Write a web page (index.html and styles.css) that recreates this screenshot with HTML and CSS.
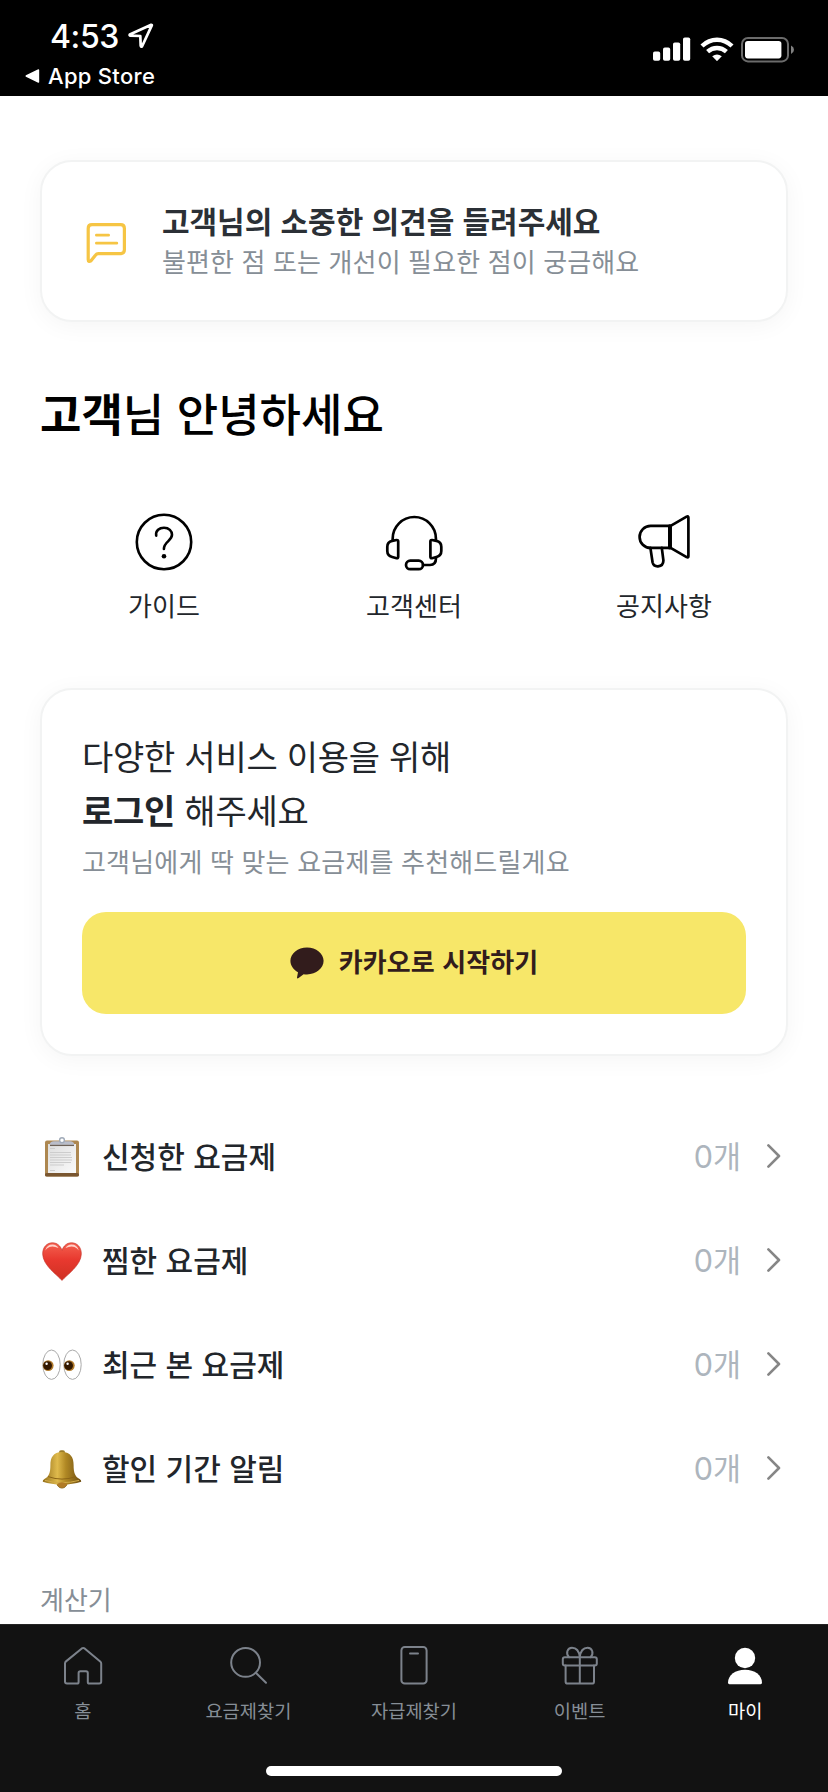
FILE: index.html
```html
<!DOCTYPE html>
<html lang="ko">
<head>
<meta charset="utf-8">
<title>마이</title>
<link rel="stylesheet" href="styles.css">
</head>
<body>
<div class="screen">
  <header class="status">
    <div class="status-left">
      <div class="time">4:53
        <svg class="locate" width="26" height="26" viewBox="0 0 26 26"><path d="M23.2 1.8 L1.8 11.4 Q1.2 12.4 2.6 12.7 L12.3 13 L12.7 22.8 Q13 24.3 14.1 23.2 L23.8 2.4 Q24 1.6 23.2 1.8Z" fill="none" stroke="#fff" stroke-width="2.7" stroke-linejoin="round"/></svg>
      </div>
      <div class="back"><svg width="15" height="14" viewBox="0 0 15 14"><path d="M13.5 1 V13 L1.2 7Z" fill="#fff" stroke="#fff" stroke-width="1.4" stroke-linejoin="round"/></svg>App Store</div>
    </div>
    <div class="status-right">
      <svg width="38" height="24" viewBox="0 0 38 24" fill="#fff"><rect x="0" y="14.6" width="7.2" height="9.2" rx="1.8"/><rect x="10" y="10.6" width="7.2" height="13.2" rx="1.8"/><rect x="20" y="5.4" width="7.2" height="18.4" rx="1.8"/><rect x="30" y="0.4" width="7.2" height="23.4" rx="1.8"/></svg>
      <svg class="wifi" width="34" height="25" viewBox="0 0 34 25"><g fill="none" stroke="#fff" stroke-width="4.4"><path d="M2 9 Q8.5 2.7 17 2.7 T32 9"/><path d="M7.6 14.7 Q11.7 11 17 11 T26.4 14.7"/></g><path d="M12.2 19.3 Q17 15.8 21.8 19.3 L17.4 23.8 Q17 24.2 16.6 23.8Z" fill="#fff"/></svg>
      <svg class="battery" width="54" height="26" viewBox="0 0 54 26"><rect x="1" y="1" width="46" height="23.4" rx="6" fill="none" stroke="#6b6b6b" stroke-width="2"/><rect x="4" y="4" width="36.4" height="17.4" rx="2.8" fill="#fff"/><path d="M50 8.6 Q53 10 53 12.8 T50 17Z" fill="#808080"/></svg>
    </div>
  </header>

  <main class="content">
    <section class="card feedback">
      <svg class="feedback-icon" width="42" height="42" viewBox="0 0 42 42" fill="none" stroke="#f6c544" stroke-width="3.2" stroke-linejoin="round" stroke-linecap="round"><path d="M6 3.6 H34.6 Q38.4 3.6 38.4 7.4 V28.8 Q38.4 32.6 34.6 32.6 H12.4 Q10.6 32.6 9.4 34.2 L5 39.8 Q2.2 41.4 2.2 38.4 V7.4 Q2.2 3.6 6 3.6Z"/><path d="M10.4 14.2 H22.6 M10.4 22.2 H30.8" stroke-width="2.8"/></svg>
      <div>
        <h2 class="feedback-title">고객님의 소중한 의견을 들려주세요</h2>
        <p class="feedback-sub">불편한 점 또는 개선이 필요한 점이 궁금해요</p>
      </div>
    </section>

    <h1 class="greeting"><b>고객</b>님 안녕하세요</h1>

    <nav class="shortcuts">
      <a class="shortcut">
        <svg width="60" height="60" viewBox="0 0 60 60" fill="none" stroke="#000" stroke-width="2.6" stroke-linecap="round"><circle cx="30" cy="31" r="27.2"/><path d="M22.2 24.6 C21.4 19.6 25.4 16.8 30 16.8 C35 16.8 38 20 38 23.8 C38 29.8 29.9 30.6 29.9 38"/><circle cx="30" cy="45.2" r="2.3" fill="#000" stroke="none"/></svg>
        <span>가이드</span>
      </a>
      <a class="shortcut">
        <svg width="60" height="60" viewBox="0 0 60 60" fill="none" stroke="#000" stroke-width="2.7" stroke-linecap="round" stroke-linejoin="round"><path d="M8.7 29 V27.6 A21.6 21.6 0 0 1 51.9 27.6 V29"/><path d="M12.6 29 L8.2 29.9 Q3.3 31 3.3 35.8 V40 Q3.3 44.6 8.2 46 L12.6 47.2 Q14.2 47.4 14.2 45.8 V30.4 Q14.2 28.8 12.6 29Z"/><path d="M48 29 L52.4 29.9 Q57.3 31 57.3 35.8 V40 Q57.3 44.6 52.4 46 L48 47.2 Q46.4 47.4 46.4 45.8 V30.4 Q46.4 28.8 48 29Z"/><rect x="22" y="49.600" width="17" height="8.6" rx="4.3"/><path d="M39 54 H46 Q52 54 52 47"/></svg>
        <span>고객센터</span>
      </a>
      <a class="shortcut">
        <svg width="60" height="60" viewBox="0 0 60 60" fill="none" stroke="#000" stroke-width="2.7" stroke-linecap="round" stroke-linejoin="round"><path d="M35.4 14.9 H16.6 A11 11 0 0 0 16.6 36.9 H35.4Z"/><path d="M36.6 14.9 L52.6 5.7 Q54.4 4.9 54.4 6.7 V45.3 Q54.4 46.9 52.6 46.1 L36.6 36.9Z"/><path d="M35.8 14.9V36.9" stroke-width="3.4"/><path d="M16.4 36.9 L18.6 51.5 Q19.6 55.5 24 55.3 Q29.4 54.7 29.4 49.4 L27.8 36.9"/></svg>
        <span>공지사항</span>
      </a>
    </nav>

    <section class="card login">
      <h2 class="login-title">다양한 서비스 이용을 위해<br><b>로그인</b> 해주세요</h2>
      <p class="login-sub">고객님에게 딱 맞는 요금제를 추천해드릴게요</p>
      <button class="kakao" type="button">
        <svg width="34" height="32" viewBox="0 0 34 32" fill="#321c1c"><path d="M17 0.4 C26.2 .4 33.6 6.4 33.6 13.8 C33.6 21.2 26.2 27.4 17 27.4 Q15.2 27.4 13.6 27.2 L8.6 31 Q6.6 32.2 7.1 30 L8 25.2 C3.4 22.8 .4 18.6 .4 13.8 C.4 6.4 7.8 .4 17 .4Z"/></svg>
        <span class="kakao-label">카카오로 시작하기</span>
      </button>
    </section>

    <ul class="list">
      <li class="row">
        <svg class="emoji" width="40" height="40" viewBox="0 0 40 40"><defs><linearGradient id="paper" x2="1" y2="1"><stop stop-color="#dedede"/><stop offset="1" stop-color="#fafafa"/></linearGradient></defs><rect x="3" y="3.6" width="34" height="36" rx="2" fill="#ad8750"/><rect x="3" y="36" width="34" height="3.6" rx="1.6" fill="#795630"/><path d="M6 7H34V36H6Z" fill="url(#paper)"/><g stroke="#cdcdcd" stroke-width="1"><path d="M8 11.5H13M8 15.5H29M8 18H29M8 20.5H30M8 23H30M8 25.500H29M8 28H22M8 33.500H13"/></g><path d="M7.600 7.800 Q8 4.200 12 4.200 H28 Q32 4.200 32.400 7.800Z" fill="#b9bdca"/><path d="M8 8.400H32" stroke="#6d6258" stroke-width="1.300"/><circle cx="20" cy="3.200" r="2.400" fill="#fff" stroke="#a1abb9" stroke-width="1.400"/></svg>
        <span class="row-label">신청한 요금제</span><span class="count">0개</span>
        <svg class="chevron" width="14" height="24" viewBox="0 0 14 24"><path d="M1.400 1.400 L12 12 L1.400 22.600"/></svg>
      </li>
      <li class="row">
        <svg class="emoji" width="40" height="40" viewBox="0 0 40 40"><defs><linearGradient id="heart" x2="0" y2="1"><stop stop-color="#f4604f"/><stop offset=".45" stop-color="#e8392f"/><stop offset="1" stop-color="#cf3023"/></linearGradient></defs><path d="M20 39.400 C16 34.500 .700 24.500 .700 12.800 C.700 6 5 1.800 10.400 1.800 C15.200 1.800 18.600 5 20 9.400 C21.400 5 24.800 1.800 29.600 1.800 C35 1.800 39.300 6 39.300 12.800 C39.300 24.500 24 34.500 20 39.400Z" fill="url(#heart)" stroke="#c9352b" stroke-width=".7"/><path d="M3.200 9.500 Q5 3.600 10.600 3.600 Q14.500 3.800 16.500 7 Q11 4.400 7.500 6 Q4.600 7.400 3.200 9.500Z" fill="#ffd2ca"/><path d="M36.800 9.500 Q35 3.600 29.400 3.600 Q25.500 3.800 23.500 7 Q29 4.400 32.500 6 Q35.400 7.400 36.800 9.500Z" fill="#ffd2ca"/></svg>
        <span class="row-label">찜한 요금제</span><span class="count">0개</span>
        <svg class="chevron" width="14" height="24" viewBox="0 0 14 24"><path d="M1.400 1.400 L12 12 L1.400 22.600"/></svg>
      </li>
      <li class="row">
        <svg class="emoji" width="40" height="40" viewBox="0 0 40 40"><g fill="#fff" stroke="#a9a9a9" stroke-width="1"><ellipse cx="9.500" cy="19.700" rx="8.700" ry="14.700"/><ellipse cx="30.500" cy="19.700" rx="8.700" ry="14.700"/></g><circle cx="6.200" cy="20.600" r="5.400" fill="#b17a2b"/><circle cx="27.300" cy="20.600" r="5.400" fill="#b17a2b"/><circle cx="5.600" cy="20.600" r="4.400" fill="#321800"/><circle cx="26.600" cy="20.600" r="4.400" fill="#321800"/><circle cx="4.600" cy="18.800" r="1.200" fill="#fff"/><circle cx="25.600" cy="18.800" r="1.200" fill="#fff"/></svg>
        <span class="row-label">최근 본 요금제</span><span class="count">0개</span>
        <svg class="chevron" width="14" height="24" viewBox="0 0 14 24"><path d="M1.400 1.400 L12 12 L1.400 22.600"/></svg>
      </li>
      <li class="row">
        <svg class="emoji" width="40" height="40" viewBox="0 0 40 40"><defs><linearGradient id="bell"><stop stop-color="#94701c"/><stop offset=".38" stop-color="#dfba4c"/><stop offset=".6" stop-color="#b08824"/><stop offset="1" stop-color="#6f4f12"/></linearGradient></defs><rect x="17" y="1.200" width="6" height="4" rx="2" fill="#9b7d28"/><circle cx="20" cy="34" r="5" fill="#b98721" stroke="#87631b"/><path d="M20 3 C29 3 31.600 9 31.600 16 C31.600 24 33 27.500 37.600 30 Q39.600 31.200 39.200 32.800 Q31 35.600 20 35.600 T.8 32.800 Q.4 31.200 2.400 30 C7 27.500 8.400 24 8.400 16 C8.400 9 11 3 20 3Z" fill="url(#bell)"/><path d="M6 27.600 Q20 32.600 34 27.600" fill="none" stroke="#8b6416" stroke-width="1"/><path d="M3 31.400 Q20 36 37 31.400" fill="none" stroke="#d2ab48" stroke-width="1"/><path d="M15 35 Q20 31.600 25 35 Q23.500 38.600 20 38.600 T15 35Z" fill="#b17b27"/></svg>
        <span class="row-label">할인 기간 알림</span><span class="count">0개</span>
        <svg class="chevron" width="14" height="24" viewBox="0 0 14 24"><path d="M1.400 1.400 L12 12 L1.400 22.600"/></svg>
      </li>
    </ul>
    <h3 class="section-label">계산기</h3>
  </main>

  <footer class="tabbar">
    <div class="tabs">
      <a class="tab"><svg width="42" height="42" viewBox="0 0 42 42"><path d="M3 18.400 Q3 17.200 4 16.400 L19.800 3.400 Q21.200 2.400 22.600 3.400 L38.200 16.400 Q39.200 17.200 39.200 18.400 V36.600 Q39.200 38.600 37.200 38.600 H27.400 Q25.800 38.600 25.800 37 V28 Q25.800 26.200 24 26.200 H18.400 Q16.600 26.200 16.600 28 V37 Q16.600 38.600 15 38.600 H5 Q3 38.600 3 36.600Z"/></svg><span>홈</span></a>
      <a class="tab"><svg width="42" height="42" viewBox="0 0 42 42"><circle cx="18.600" cy="17.400" r="14.400"/><path d="M28.800 27.800 L39 37.800"/></svg><span>요금제찾기</span></a>
      <a class="tab"><svg width="42" height="42" viewBox="0 0 42 42"><rect x="8.400" y="2" width="25.200" height="36.600" rx="3.400"/><path d="M17 8.400H25"/></svg><span>자급제찾기</span></a>
      <a class="tab"><svg width="42" height="42" viewBox="0 0 42 42"><rect x="3.800" y="12.200" width="34" height="8.200" rx="2"/><path d="M6.600 20.400 V36.400 Q6.600 38.600 8.800 38.600 H32.800 Q35 38.600 35 36.400 V20.400 M20.800 12.200V38.600 M20.800 12.200 C20.200 7 17.600 2.800 13 2.800 C8.400 2.800 6.400 8.200 10 12.200 M20.800 12.200 C21.400 7 24 2.800 28.600 2.800 C33.200 2.800 35.200 8.200 31.600 12.200"/></svg><span>이벤트</span></a>
      <a class="tab active"><svg width="42" height="42" viewBox="0 0 42 42"><circle cx="21" cy="13" r="10.200"/><path d="M5.400 39.200 Q4 39.200 4 37.800 C4 30 11.400 24.800 21 24.800 S38 30 38 37.800 Q38 39.200 36.600 39.200Z"/></svg><span>마이</span></a>
    </div>
    <div class="home-indicator"></div>
  </footer>
</div>
</body>
</html>
```

FILE: styles.css
```css
* { box-sizing: border-box; }
body, h1, h2, h3, p, ul { margin: 0; padding: 0; }
body {
  background: #fff;
  color: #22262b;
  font-family: "Noto Sans CJK KR", "Noto Sans", sans-serif;
}
svg { display: block; flex: none; }
.screen { width: 828px; height: 1792px; display: flex; flex-direction: column; overflow: hidden; }

.status {
  height: 96px; flex: none; background: #000; color: #fff;
  display: flex; justify-content: space-between;
  font-family: Inter, "Liberation Sans", sans-serif;
}
.status-left { padding: 16px 0 0 25px; }
.time { display: flex; align-items: center; gap: 9px; height: 40px; padding-left: 25px; font-size: 32px; font-weight: 550; letter-spacing: -.4px; }
.back { display: flex; align-items: center; gap: 8px; height: 40px; font-size: 22px; font-weight: 500; letter-spacing: .3px; }
.status-right { display: flex; align-items: flex-start; padding: 37px 33px 0 0; }
.wifi { margin-left: 9px; }
.battery { margin-left: 7px; }

.content { flex: 1; min-height: 0; padding: 64px 40px 0; overflow: hidden; }
.card { border: 2px solid #f2f3f3; border-radius: 32px; box-shadow: 0 4px 24px rgba(0, 0, 0, .045); background: #fff; }

.feedback { height: 162px; padding: 0 44px 1px; display: flex; align-items: center; gap: 34px; }
.feedback-icon { margin-top: 2px; }
.feedback-title { font-size: 30px; line-height: 40px; font-weight: 700; letter-spacing: -.05px; color: #2b3036; }
.feedback-sub { font-size: 26px; line-height: 41px; letter-spacing: .13px; color: #868e96; }

.greeting { margin-top: 58px; font-size: 45px; line-height: 66px; font-weight: 500; color: #000; }

.shortcuts { display: grid; grid-template-columns: repeat(3, 1fr); margin: 65px -1px 0; }
.shortcut { display: flex; flex-direction: column; align-items: center; gap: 14px; font-size: 26px; line-height: 40px; letter-spacing: .1px; }

.login { height: 368px; margin-top: 63px; padding: 39px 40px 0; }
.login-title { font-size: 34px; line-height: 54px; font-weight: 400; letter-spacing: -.25px; }
.login-sub { margin-top: 4px; font-size: 26px; line-height: 40px; letter-spacing: .18px; color: #868e96; }
.kakao {
  width: 100%; height: 102px; margin-top: 31px; border: 0; border-radius: 24px;
  background: #f7e769; color: #321c1c;
  display: flex; align-items: center; justify-content: center; gap: 15px;
  font: 700 26px/40px "Noto Sans CJK KR", sans-serif;
}
.kakao-label { padding-bottom: 4px; letter-spacing: .1px; }

.list { list-style: none; margin-top: 48px; }
.row { display: flex; align-items: center; height: 104px; padding: 0 7px 0 2px; font-size: 30px; line-height: 44px; }
.emoji { margin-top: 2px; }
.row-label { flex: 1; margin-left: 20px; padding-bottom: 2px; font-weight: 500; }
.count { margin-right: 26px; padding-top: 1px; font-family: Inter, "Noto Sans CJK KR", sans-serif; font-size: 30.5px; color: #adb5bd; }
.chevron { fill: none; stroke: #868686; stroke-width: 2.6; stroke-linecap: round; stroke-linejoin: round; }
.section-label { margin-top: 59px; font-size: 26px; line-height: 40px; font-weight: 400; color: #868e96; }

.tabbar { height: 168px; flex: none; background: #121212; border-top: 1px solid #242424; display: flex; flex-direction: column; align-items: center; justify-content: space-between; padding: 20px 0 16px; }
.tabs { width: 100%; display: grid; grid-template-columns: repeat(5, 1fr); }
.tab { display: flex; flex-direction: column; align-items: center; gap: 8px; font-size: 18.700px; line-height: 30px; color: #868e96; }
.tab svg { fill: none; stroke: #7c828b; stroke-width: 2; stroke-linecap: round; stroke-linejoin: round; }
.tab.active { color: #fff; }
.tab.active svg { fill: #fff; stroke: none; }
.home-indicator { width: 296px; height: 10px; border-radius: 5px; background: #fff; }
```
